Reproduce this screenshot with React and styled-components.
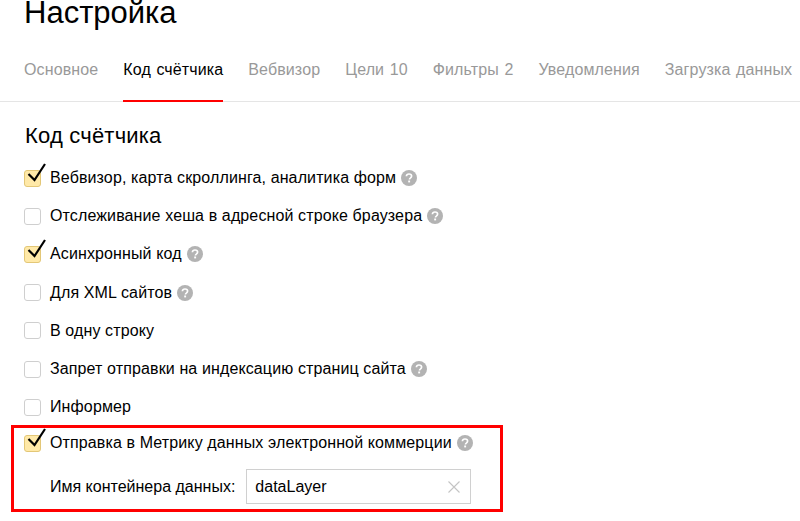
import React from "react";
import styled, { createGlobalStyle } from "styled-components";

const GlobalStyle = createGlobalStyle`
  html, body {
    margin: 0;
    padding: 0;
    background: #fff;
    overflow: hidden;
  }
  body {
    font-family: "Liberation Sans", Arial, sans-serif;
    color: #000;
  }
`;

const Page = styled.div`
  width: 800px;
  height: 521px;
  overflow: hidden;
`;

const Title = styled.h1`
  margin: 0;
  padding: 0 0 0 24px;
  height: 46px;
  font-size: 31px;
  line-height: 26px;
  font-weight: 400;
`;

const Tabs = styled.nav`
  display: flex;
  gap: 25px;
  height: 55px;
  padding-left: 24px;
  border-bottom: 1px solid #e5e5e5;
  white-space: nowrap;
`;

const Tab = styled.a`
  height: 56px;
  box-sizing: border-box;
  padding-top: 15px;
  font-size: 16px;
  line-height: 18px;
  letter-spacing: 0.12px;
  word-spacing: 1px;
  color: ${(props) => (props.$active ? "#000" : "#999")};
  border-bottom: 2px solid ${(props) => (props.$active ? "#f00" : "transparent")};
`;

const Content = styled.div`
  padding: 21px 0 0 24px;
`;

const Heading = styled.h2`
  margin: 0 0 10px 1px;
  font-size: 22px;
  line-height: 26px;
  font-weight: 400;
  letter-spacing: 0.2px;
`;

const Row = styled.label`
  display: flex;
  align-items: center;
  height: 38.2px;
  font-size: 16px;
  letter-spacing: 0.12px;
`;

const Box = styled.span`
  position: relative;
  flex: none;
  width: 15px;
  height: 15px;
  margin-right: 9px;
  border: 1px solid ${(props) => (props.$checked ? "#e3c777" : "#cfcfcf")};
  border-radius: 3px;
  background: ${(props) => (props.$checked ? "#ffe9a8" : "#fff")};
`;

const Tick = styled.svg`
  position: absolute;
  left: 2px;
  top: -7px;
  overflow: visible;
`;

const Help = styled.svg`
  flex: none;
  margin-left: 5px;
`;

const Highlight = styled.div`
  box-sizing: border-box;
  width: 492px;
  height: 87px;
  margin: -1.3px 0 0 -13px;
  padding: 0 0 0 13px;
  border: 3px solid #f00;
`;

const HighlightRow = styled(Row)`
  height: 30px;
  margin-left: -3px;
`;

const Field = styled.div`
  display: flex;
  align-items: center;
  margin: 11px 0 0 23px;
  font-size: 16px;
`;

const FieldLabel = styled.span`
  margin-right: 11px;
`;

const InputBox = styled.div`
  display: flex;
  align-items: center;
  justify-content: space-between;
  box-sizing: border-box;
  width: 225px;
  height: 35px;
  padding: 0 10px 0 8px;
  border: 1px solid #d0d0d0;
  font-size: 16px;
`;

const HelpIcon = () => (
  <Help width="16" height="16" viewBox="0 0 16 16">
    <circle cx="8" cy="8" r="8" fill="#b3b3b3" />
    <path
      d="M5.4 6.2C5.5 4.8 6.5 4 8 4c1.5 0 2.6.8 2.6 2.1 0 1-.6 1.5-1.3 2-.6.4-.8.7-.8 1.3"
      fill="none"
      stroke="#fff"
      strokeWidth="1.7"
    />
    <rect x="7.2" y="10.5" width="1.9" height="1.9" fill="#fff" />
  </Help>
);

const Check = ({ checked }) => (
  <Box $checked={checked}>
    {checked && (
      <Tick width="20" height="20" viewBox="0 0 20 20">
        <path d="M1.5 10 L7.5 16 L18 0" fill="none" stroke="#000" strokeWidth="2.2" />
      </Tick>
    )}
  </Box>
);

const tabs = [
  "Основное",
  "Код счётчика",
  "Вебвизор",
  "Цели 10",
  "Фильтры 2",
  "Уведомления",
  "Загрузка данных",
];

const options = [
  { text: "Вебвизор, карта скроллинга, аналитика форм", checked: true, help: true },
  { text: "Отслеживание хеша в адресной строке браузера", help: true },
  { text: "Асинхронный код", checked: true, help: true },
  { text: "Для XML сайтов", help: true },
  { text: "В одну строку" },
  { text: "Запрет отправки на индексацию страниц сайта", help: true },
  { text: "Информер" },
];

const App = () => (
  <Page>
    <GlobalStyle />
    <Title>Настройка</Title>
    <Tabs>
      {tabs.map((tab) => (
        <Tab key={tab} $active={tab === "Код счётчика"}>
          {tab}
        </Tab>
      ))}
    </Tabs>
    <Content>
      <Heading>Код счётчика</Heading>
      {options.map((option) => (
        <Row key={option.text}>
          <Check checked={option.checked} />
          {option.text}
          {option.help && <HelpIcon />}
        </Row>
      ))}
      <Highlight>
        <HighlightRow>
          <Check checked />
          Отправка в Метрику данных электронной коммерции
          <HelpIcon />
        </HighlightRow>
        <Field>
          <FieldLabel>Имя контейнера данных:</FieldLabel>
          <InputBox>
            dataLayer
            <svg width="12" height="12" viewBox="0 0 12 12">
              <path d="M0.5 0.5 L11.5 11.5 M11.5 0.5 L0.5 11.5" stroke="#c4c4c4" strokeWidth="1.1" />
            </svg>
          </InputBox>
        </Field>
      </Highlight>
    </Content>
  </Page>
);

export default App;
